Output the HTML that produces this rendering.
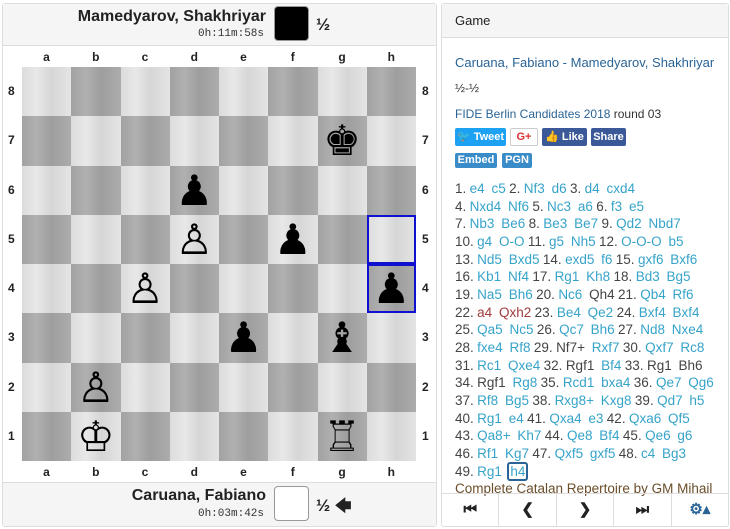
<!DOCTYPE html>
<html><head><meta charset="utf-8"><style>
*{box-sizing:border-box;margin:0;padding:0}
body{width:730px;height:529px;background:#fff;font-family:"Liberation Sans",sans-serif;position:relative;overflow:hidden}
.lp{position:absolute;left:2px;top:3px;width:435px;height:524px;border:1px solid #ddd;border-radius:3px}
.hd{position:absolute;left:0;top:0;width:433px;height:42px;background:#f5f5f5;border-bottom:1px solid #ddd}
.ft{position:absolute;left:0;bottom:0;width:433px;height:44px;background:#f5f5f5;border-top:1px solid #ddd}
.name{position:absolute;font-weight:bold;font-size:16px;color:#222;right:170px}
.clk{position:absolute;font-family:"Liberation Mono",monospace;font-size:11px;color:#333;right:172px}
.sw{position:absolute;width:35px;height:35px;border-radius:4px;border:1px solid #999}
.half{position:absolute;font-size:17px;font-weight:bold;color:#222}
.sq{position:absolute;width:49.25px;height:49.25px}
.l{background:linear-gradient(90deg,#dcdcdc,#e8e8e8 30%,#d6d6d6 60%,#e4e4e4)}
.d{background:linear-gradient(90deg,#a2a2a2,#b0b0b0 30%,#9e9e9e 60%,#acacac)}
.pc{position:absolute;width:49.25px;height:49.25px;font-family:"DejaVu Sans",sans-serif;font-size:42px;line-height:49px;text-align:center;color:#000}
.co{position:absolute;font-size:12px;font-weight:bold;color:#222;width:49px;text-align:center}
.ro{position:absolute;font-size:12px;font-weight:bold;color:#222}
.rp{position:absolute;left:441px;top:3px;width:288px;height:524px;border:1px solid #ddd;border-radius:3px}
.rh{height:34px;background:#f5f5f5;border-bottom:1px solid #ddd;font-size:13px;padding:9px 13px;color:#222}
a{color:#2a6496;text-decoration:none}
.btn{position:absolute;color:#fff;font-size:11px;font-weight:bold;border-radius:2px;height:18px;line-height:18px;text-align:center}
.mv{position:absolute;left:13px;top:176px;font-size:13.5px;line-height:17.65px;color:#444;white-space:nowrap}
.mv b{font-weight:normal;color:#36a3c9;margin:0 3.4px}
.mv i{font-style:normal;color:#444;margin:0 3.4px}
.mv s{text-decoration:none;color:#a03c3c;margin:0 3.4px}
.nav{position:absolute;left:0;bottom:0;width:286px;height:33px;border-top:1px solid #ddd;display:flex}
.nav div{flex:1;border-right:1px solid #ddd;text-align:center;font-size:15px;font-weight:bold;line-height:31px;color:#222}
</style></head><body>
<div class="lp">
<div class="hd">
<div class="name" style="top:4px">Mamedyarov, Shakhriyar</div>
<div class="clk" style="top:24px">0h:11m:58s</div>
<div class="sw" style="left:271px;top:2px;background:#000"></div>
<div class="half" style="left:313px;top:11px">½</div>
</div>
<div class="ft">
<div class="name" style="top:4px">Caruana, Fabiano</div>
<div class="clk" style="top:25px">0h:03m:42s</div>
<div class="sw" style="left:271px;top:3px;background:#fff"></div>
<div class="half" style="left:313px;top:12px">½ <span style="font-size:16px">🡄</span></div>
</div>
</div>
<div id="b"></div>
<div class="rp">
<div class="rh">Game</div>
<div style="position:absolute;left:13px;top:51px;font-size:13px"><a>Caruana, Fabiano - Mamedyarov, Shakhriyar</a></div>
<div style="position:absolute;left:13px;top:77px;font-size:12px;color:#333">½-½</div>
<div style="position:absolute;left:13px;top:103px;font-size:12px;color:#333"><a>FIDE Berlin Candidates 2018</a> round 03</div>
<span class="btn" style="background:#1da1f2;left:13px;top:124px;width:51px">🐦 Tweet</span>
<span class="btn" style="background:#fff;color:#d33;border:1px solid #ccc;left:68px;top:124px;width:28px;line-height:16px">G+</span>
<span class="btn" style="background:#3b5998;left:100px;top:124px;width:45px">👍 Like</span>
<span class="btn" style="background:#3b5998;left:149px;top:124px;width:35px">Share</span>
<span class="btn" style="background:#3a8cc9;left:13px;top:149px;width:42px;height:15px;line-height:15px">Embed</span>
<span class="btn" style="background:#3a8cc9;left:60px;top:149px;width:30px;height:15px;line-height:15px">PGN</span>
<div class="mv">
1.<b>e4</b><b>c5</b>2.<b>Nf3</b><b>d6</b>3.<b>d4</b><b>cxd4</b><br>
4.<b>Nxd4</b><b>Nf6</b>5.<b>Nc3</b><b>a6</b>6.<b>f3</b><b>e5</b><br>
7.<b>Nb3</b><b>Be6</b>8.<b>Be3</b><b>Be7</b>9.<b>Qd2</b><b>Nbd7</b><br>
10.<b>g4</b><b>O-O</b>11.<b>g5</b><b>Nh5</b>12.<b>O-O-O</b><b>b5</b><br>
13.<b>Nd5</b><b>Bxd5</b>14.<b>exd5</b><b>f6</b>15.<b>gxf6</b><b>Bxf6</b><br>
16.<b>Kb1</b><b>Nf4</b>17.<b>Rg1</b><b>Kh8</b>18.<b>Bd3</b><b>Bg5</b><br>
19.<b>Na5</b><b>Bh6</b>20.<b>Nc6</b><i>Qh4</i>21.<b>Qb4</b><b>Rf6</b><br>
22.<s>a4</s><s>Qxh2</s>23.<b>Be4</b><b>Qe2</b>24.<b>Bxf4</b><b>Bxf4</b><br>
25.<b>Qa5</b><b>Nc5</b>26.<b>Qc7</b><b>Bh6</b>27.<b>Nd8</b><b>Nxe4</b><br>
28.<b>fxe4</b><b>Rf8</b>29.<i>Nf7+</i><b>Rxf7</b>30.<b>Qxf7</b><b>Rc8</b><br>
31.<b>Rc1</b><b>Qxe4</b>32.<i>Rgf1</i><b>Bf4</b>33.<i>Rg1</i><i>Bh6</i><br>
34.<i>Rgf1</i><b>Rg8</b>35.<b>Rcd1</b><b>bxa4</b>36.<b>Qe7</b><b>Qg6</b><br>
37.<b>Rf8</b><b>Bg5</b>38.<b>Rxg8+</b><b>Kxg8</b>39.<b>Qd7</b><b>h5</b><br>
40.<b>Rg1</b><b>e4</b>41.<b>Qxa4</b><b>e3</b>42.<b>Qxa6</b><b>Qf5</b><br>
43.<b>Qa8+</b><b>Kh7</b>44.<b>Qe8</b><b>Bf4</b>45.<b>Qe6</b><b>g6</b><br>
46.<b>Rf1</b><b>Kg7</b>47.<b>Qxf5</b><b>gxf5</b>48.<b>c4</b><b>Bg3</b><br>
49.<b>Rg1</b><b style="border:2px solid #2a6496;border-radius:3px;padding:0 1px;margin-left:2px">h4</b><br>
<span style="color:#6b4e2a">Complete Catalan Repertoire by GM Mihail</span>
</div>
<div class="nav"><div>⏮</div><div>❮</div><div>❯</div><div>⏭</div><div style="border-right:0;color:#2a6496">⚙▴</div></div>
</div>
<script>
var h='',S=49.25,X=22,Y=67,f='abcdefgh';
for(var r=0;r<8;r++)for(var c=0;c<8;c++){h+='<div class="sq '+((r+c)%2?'d':'l')+'" style="left:'+(X+c*S)+'px;top:'+(Y+r*S)+'px"></div>';}
var P={g7:'♚',d6:'♟',d5:'♙',f5:'♟',c4:'♙',h4:'♟',e3:'♟',g3:'♝',b2:'♙',b1:'♔',g1:'♖'};
for(var k in P){var c=f.indexOf(k[0]),r=8-+k[1];h+='<div class="pc" style="left:'+(X+c*S)+'px;top:'+(Y+r*S)+'px">'+P[k]+'</div>';}
['h5','h4'].forEach(function(k){var r=8-+k[1];h+='<div style="position:absolute;left:'+(X+7*S)+'px;top:'+(Y+r*S)+'px;width:49.25px;height:49.25px;border:2px solid #1010d0"></div>'});
for(var c=0;c<8;c++){h+='<div class="co" style="left:'+(X+c*S)+'px;top:50px">'+f[c]+'</div><div class="co" style="left:'+(X+c*S)+'px;top:465px">'+f[c]+'</div>';}
for(var r=0;r<8;r++){h+='<div class="ro" style="left:8px;top:'+(Y+r*S+17)+'px">'+(8-r)+'</div><div class="ro" style="left:422px;top:'+(Y+r*S+17)+'px">'+(8-r)+'</div>';}
document.getElementById('b').innerHTML=h;
</script>
</body></html>
